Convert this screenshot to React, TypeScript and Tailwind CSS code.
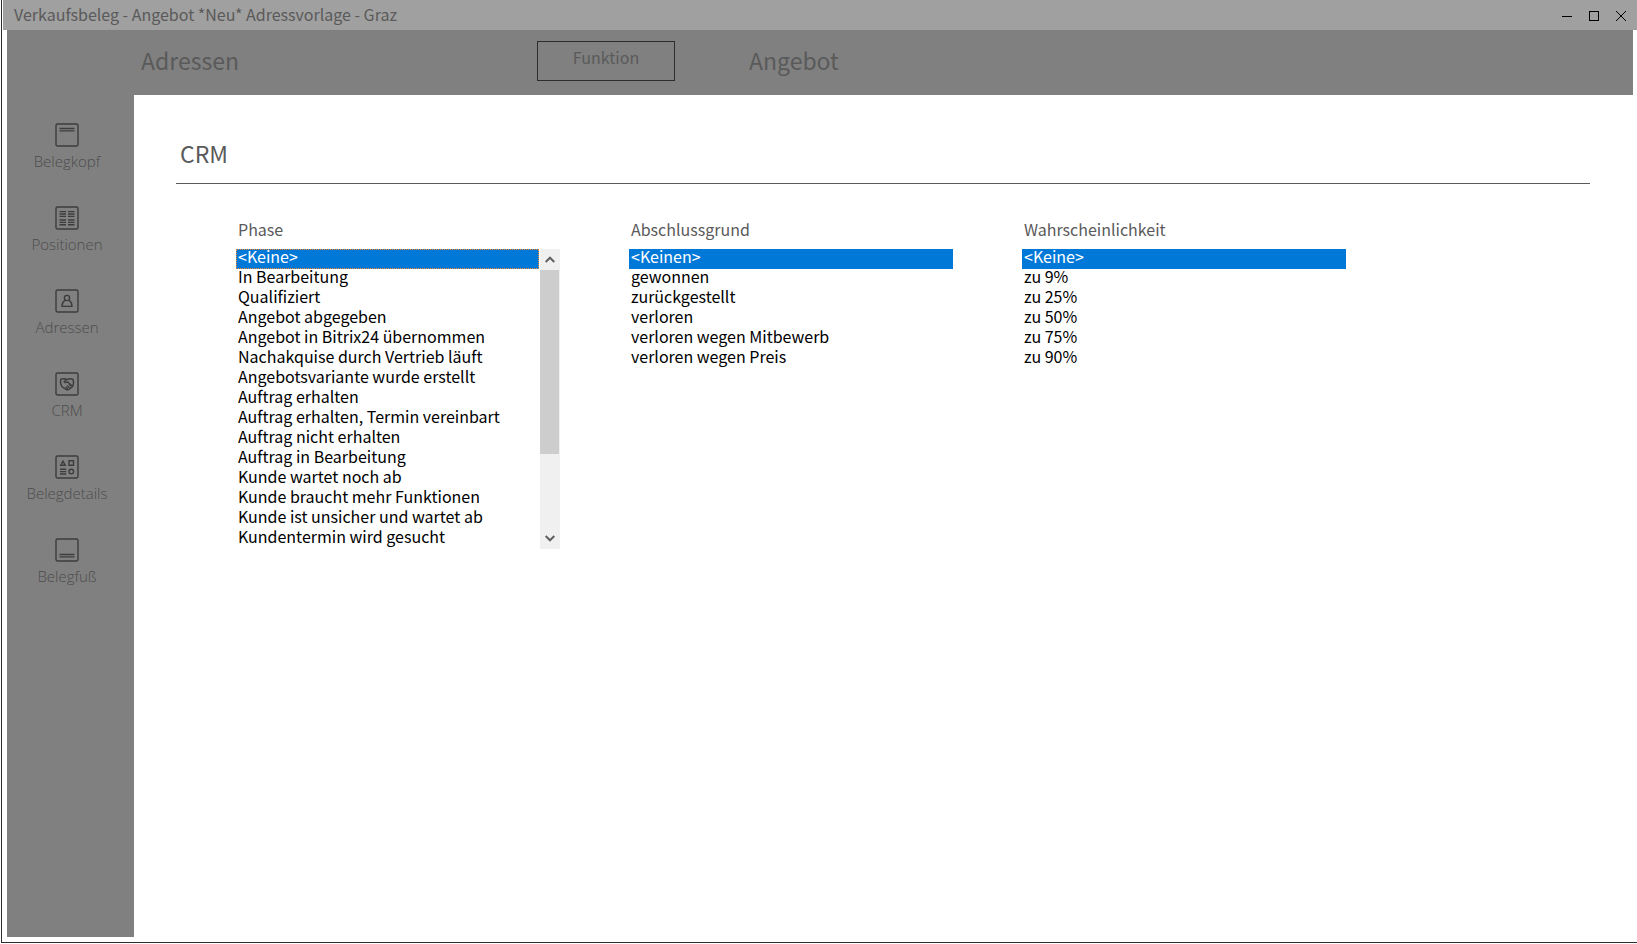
import { useRef } from "react";
import type { ReactNode } from "react";

type NavEntry = { label: string; icon: ReactNode };

function Frame({ children }: { children: ReactNode }) {
  return (
    <svg
      viewBox="0 0 24 24"
      className="block size-6 text-[#3c3c3c]"
      fill="none"
      stroke="currentColor"
      strokeWidth="1.4"
      aria-hidden="true"
    >
      <rect x="1" y="1" width="22" height="22" rx="1.4" />
      {children}
    </svg>
  );
}

const navEntries: NavEntry[] = [
  {
    label: "Belegkopf",
    icon: (
      <Frame>
        <path d="M4.5 5.5h15M4.5 7.9h15" />
      </Frame>
    ),
  },
  {
    label: "Positionen",
    icon: (
      <Frame>
        <path d="M4.5 5.6H11M4.5 8H11M4.5 10.4H11M13 5.6h6.5M13 8h6.5M13 10.4h6.5M4.5 14H11M4.5 16.4H11M4.5 18.8H11M13 14h6.5M13 16.4h6.5M13 18.8h6.5" />
      </Frame>
    ),
  },
  {
    label: "Adressen",
    icon: (
      <Frame>
        <circle cx="12" cy="9" r="2.6" />
        <path d="M9.8 11.4C8 12.6 7 14.6 7 17.4h10c0-2.8-1-4.8-2.8-6" />
      </Frame>
    ),
  },
  {
    label: "CRM",
    icon: (
      <Frame>
        <path d="M5.8 7.2c3-.9 4.700-.6 6.200.3 1.700-.9 3.600-1 6-.2.8 2.700.8 5.200-.4 7.200l-3.600 2.900c-.8.5-1.700.4-2.600.1l-4-2.500C5.300 12.800 5.200 10 5.800 7.200Z" />
        <path d="M12 7.500 9.200 9.600c.6 1.400 2 1.200 3.400.2l4.800 4.400M12.200 13.400l2.400 2.300M10.600 14.800l2 2M14 11.800l2.200 2.300" />
      </Frame>
    ),
  },
  {
    label: "Belegdetails",
    icon: (
      <Frame>
        <path d="M8 6.200 5.800 10.200h4.400ZM14 5.800h4.500v4.400H14ZM5 14.200h6.200M5 16.600h6.200M5 19h6.200" />
        <circle cx="16.3" cy="16.6" r="2.3" />
      </Frame>
    ),
  },
  {
    label: "Belegfuß",
    icon: (
      <Frame>
        <path d="M4.5 16.5h15M4.5 18.9h15" />
      </Frame>
    ),
  },
];

const phases = [
  "<Keine>",
  "In Bearbeitung",
  "Qualifiziert",
  "Angebot abgegeben",
  "Angebot in Bitrix24 übernommen",
  "Nachakquise durch Vertrieb läuft",
  "Angebotsvariante wurde erstellt",
  "Auftrag erhalten",
  "Auftrag erhalten, Termin vereinbart",
  "Auftrag nicht erhalten",
  "Auftrag in Bearbeitung",
  "Kunde wartet noch ab",
  "Kunde braucht mehr Funktionen",
  "Kunde ist unsicher und wartet ab",
  "Kundentermin wird gesucht",
];

const reasons = [
  "<Keinen>",
  "gewonnen",
  "zurückgestellt",
  "verloren",
  "verloren wegen Mitbewerb",
  "verloren wegen Preis",
];

const odds = ["<Keine>", "zu 9%", "zu 25%", "zu 50%", "zu 75%", "zu 90%"];

type ListFieldProps = {
  id: string;
  label: string;
  options: string[];
  scrollable?: boolean;
};

function ListField({ id, label, options, scrollable = false }: ListFieldProps) {
  const list = useRef<HTMLSelectElement>(null);
  const scroll = (dy: number) => list.current?.scrollBy({ top: dy });

  return (
    <div className="w-[324px]">
      <label htmlFor={id} className="block pl-0.5 text-[16px] leading-6 text-[#5a5a5a]">
        {label}
      </label>
      <div className="mt-2 flex h-[300px] gap-px">
        <select
          ref={list}
          id={id}
          size={15}
          defaultValue={options[0]}
          className="h-full min-w-0 flex-1 appearance-none overflow-hidden border-0 bg-white p-0 text-[16px] text-black outline-none"
        >
          {options.map((option) => (
            <option
              key={option}
              className={
                scrollable
                  ? "flex h-5 min-h-5 items-end px-0.5 pt-0 pb-px checked:bg-[linear-gradient(#0078d7,#0078d7)] checked:outline-1 checked:-outline-offset-1 checked:outline-dotted checked:outline-[#ff8728] checked:[-webkit-text-fill-color:white]"
                  : "flex h-5 min-h-5 items-end px-0.5 pt-0 pb-px checked:bg-[linear-gradient(#0078d7,#0078d7)] checked:[-webkit-text-fill-color:white]"
              }
            >
              {option}
            </option>
          ))}
        </select>
        {scrollable && (
          <div className="flex w-5 flex-col bg-[#f0f0f0]">
            <button
              type="button"
              aria-label="Nach oben"
              onClick={() => scroll(-20)}
              className="flex h-[21px] items-center justify-center"
            >
              <svg viewBox="0 0 10 7" className="h-[7px] w-2.5" fill="none" stroke="#606060" strokeWidth="2" aria-hidden="true">
                <path d="M.7 6 5 1.700 9.300 6" />
              </svg>
            </button>
            <div className="flex-1">
              <div className="h-[184px] w-[19px] bg-[#cdcdcd]" />
            </div>
            <button
              type="button"
              aria-label="Nach unten"
              onClick={() => scroll(20)}
              className="flex h-[21px] items-center justify-center"
            >
              <svg viewBox="0 0 10 7" className="h-[7px] w-2.5" fill="none" stroke="#606060" strokeWidth="2" aria-hidden="true">
                <path d="M.7 1 5 5.300 9.300 1" />
              </svg>
            </button>
          </div>
        )}
      </div>
    </div>
  );
}

export default function App() {
  return (
    <div className="flex min-h-screen flex-col bg-white pb-px pl-px font-['Noto_Sans_CJK_SC',sans-serif] text-[#5a5a5a]">
      <div className="flex flex-1 flex-col border-b border-l border-[#2d2d2d] pl-px">
        <header className="flex h-[30px] items-center justify-between bg-[#a0a0a0] pr-2.5 pl-[11px]">
          <h1 className="pb-0.5 text-[16px] leading-6">Verkaufsbeleg - Angebot *Neu* Adressvorlage - Graz</h1>
          <div className="flex gap-[15px] pt-0.5 text-black">
            <button type="button" aria-label="Minimieren">
              <svg viewBox="0 0 12 12" className="block size-3" stroke="currentColor" fill="none" shapeRendering="crispEdges">
                <path d="M1 6.500h10" />
              </svg>
            </button>
            <button type="button" aria-label="Maximieren">
              <svg viewBox="0 0 12 12" className="block size-3" stroke="currentColor" fill="none" shapeRendering="crispEdges">
                <path d="M1.500 1.500h9v9h-9z" />
              </svg>
            </button>
            <button type="button" aria-label="Schließen">
              <svg viewBox="0 0 12 12" className="block size-3" stroke="currentColor" fill="none">
                <path d="m1 1 10 10M11 1 1 11" />
              </svg>
            </button>
          </div>
        </header>

        <div className="flex flex-1 flex-col pr-1 pb-[5px] pl-1">
          <div className="flex h-[65px] items-start bg-[#808080] pl-[134px]">
            <h2 className="w-[396px] pt-3 text-[23px] leading-9">Adressen</h2>
            <button
              type="button"
              className="mt-[11px] h-10 w-[138px] border border-[#2d2d2d] pb-2 text-[16px] leading-6"
            >
              Funktion
            </button>
            <h2 className="ml-[74px] pt-3 text-[23px] leading-9">Angebot</h2>
          </div>

          <div className="flex flex-1">
            <nav className="w-[127px] bg-[#808080] pt-7 pr-[7px] text-[#4c4c4c]">
              <ul className="flex flex-col gap-[31px]">
                {navEntries.map((entry) => (
                  <li key={entry.label}>
                    <button
                      type="button"
                      className="flex h-[52px] w-full flex-col items-center gap-0.5 font-['Open_Sans',sans-serif] text-[15px] leading-6 font-light"
                    >
                      {entry.icon}
                      {entry.label}
                    </button>
                  </li>
                ))}
              </ul>
            </nav>

            <main className="flex-1 pr-[43px] pl-[42px]">
              <h2 className="border-b border-[#5a5a5a] pt-10 pb-3 pl-1 text-[23px] leading-9">CRM</h2>
              <div className="flex gap-[69px] pt-[33px] pl-[60px]">
                <ListField id="phase" label="Phase" options={phases} scrollable />
                <ListField id="abschlussgrund" label="Abschlussgrund" options={reasons} />
                <ListField id="wahrscheinlichkeit" label="Wahrscheinlichkeit" options={odds} />
              </div>
            </main>
          </div>
        </div>
      </div>
    </div>
  );
}
